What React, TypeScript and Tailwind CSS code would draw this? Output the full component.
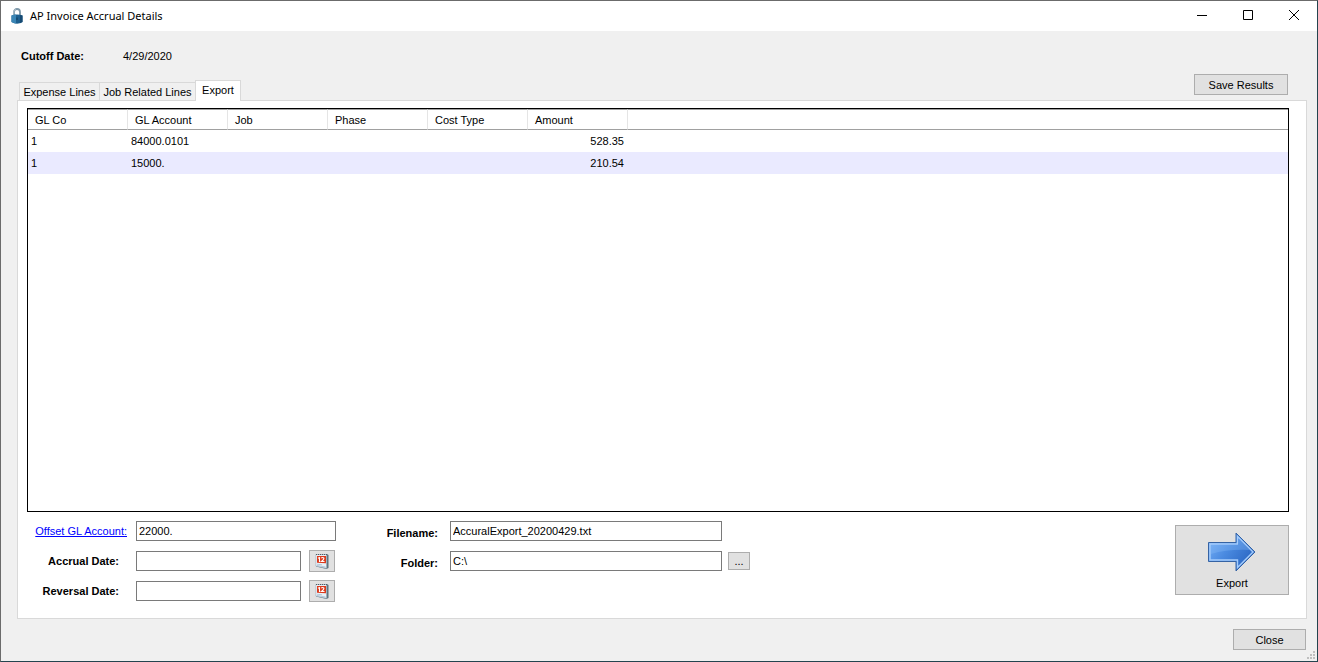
import { useState } from 'react';

const tabs = [
  { name: 'Expense Lines', width: 'w-20' },
  { name: 'Job Related Lines', width: 'w-24' },
  { name: 'Export', width: 'w-[46px]' },
];

const columns = ['GL Co', 'GL Account', 'Job', 'Phase', 'Cost Type', 'Amount'];

const rows = [
  { co: '1', account: '84000.0101', job: '', phase: '', costType: '', amount: '528.35' },
  { co: '1', account: '15000.', job: '', phase: '', costType: '', amount: '210.54' },
];

const buttonClass = 'border border-[#adadad] bg-[#e1e1e1] text-center hover:bg-[#e5f1fb]';
const inputClass = 'h-5 min-w-0 border border-[#7a7a7a] bg-white px-0.5 outline-none focus:border-[#0078d7]';

function LockIcon() {
  return (
    <svg className="h-4 w-3" viewBox="0 0 12 16" fill="none">
      <path d="M3 8V4a3 3 0 0 1 6 0v4" stroke="#7d97a8" strokeWidth="1.8" />
      <path d="M2.8 8V4a3 3 0 0 1 2-2.700" stroke="#b9cad4" strokeWidth="0.8" />
      <path d="M0.500 7.500Q6 5.500 11.500 7.500V14Q6 17.500 0.500 14Z" fill="#1d5f8f" />
      <path d="M0.500 7.500Q3 6.500 5 6.500V15.600Q2.500 15.200 0.500 14Z" fill="#3a85b5" />
      <path d="M9 6.900L11.500 7.500V14L9 15.200Z" fill="#164a73" />
      <path d="M6 9.500V12" stroke="#0f3858" />
    </svg>
  );
}

function CalendarIcon() {
  return (
    <svg className="h-4 w-4" viewBox="0 0 16 16" fill="none">
      <path d="M2 1.500L13 1L14.500 2V15L12.500 16L2 13.500Z" fill="#5f7480" />
      <path d="M1.800 1.500H12.500V15.200L1.800 13Z" fill="#e9f0f6" stroke="#9fb0bd" strokeWidth="0.6" />
      <path d="M2 1.500H13" stroke="#525c63" strokeDasharray="1 1" />
      <path d="M3 3H12V10.200L3 9.800Z" fill="#dc3a1c" />
      <path d="M4 5.200L5.500 4.500V9" stroke="#fff" strokeWidth="1.100" />
      <path d="M7.200 5.200Q8.500 4 9.800 5Q10.400 6.200 7.500 8.500H10.500" stroke="#fff" strokeWidth="1.100" />
      <path d="M3 11.200L8 11.800M3 12.500L11.500 14" stroke="#b5c9da" />
    </svg>
  );
}

function ArrowIcon() {
  return (
    <svg className="h-10 w-12" viewBox="0 0 48 40" fill="none">
      <defs>
        <linearGradient id="arrow" x1="0" y1="0" x2="1" y2="0.6">
          <stop offset="0" stopColor="#7db6fa" />
          <stop offset="0.5" stopColor="#4a8ae0" />
          <stop offset="1" stopColor="#2a66c2" />
        </linearGradient>
      </defs>
      <path d="M0.500 10.500H28V1L47 20L28 39V29.500H0.500Z" fill="url(#arrow)" stroke="#3563a4" />
      <path d="M2 28V12H29.500V4.500L45 20L29.500 35.500V28Z" stroke="#a6cdfb" strokeWidth="1.400" />
      <path d="M3 13H30.500V7L42 18Q20 17 3 22Z" fill="#8fc0fa" opacity="0.3" />
    </svg>
  );
}

function TitleBar() {
  return (
    <header className="flex h-[30px] shrink-0 items-center bg-white pl-2.5">
      <LockIcon />
      <h1 className="ml-[7px] font-['Noto_Sans',sans-serif] text-[11px]">AP Invoice Accrual Details</h1>
      <div className="ml-auto flex h-full">
        <button aria-label="Minimize" className="flex w-[46px] items-center justify-center hover:bg-gray-200">
          <svg className="h-3 w-3" viewBox="0 0 12 12" stroke="#000"><path d="M1 5.500H11" /></svg>
        </button>
        <button aria-label="Maximize" className="flex w-[46px] items-center justify-center hover:bg-gray-200">
          <svg className="h-3 w-3" viewBox="0 0 12 12" stroke="#000" fill="none"><path d="M1.500 0.500H10.500V9.500H1.500Z" /></svg>
        </button>
        <button aria-label="Close window" className="flex w-[46px] items-center justify-center hover:bg-red-500">
          <svg className="h-3 w-3" viewBox="0 0 12 12" stroke="#000"><path d="M1 0L11 10M11 0L1 10" /></svg>
        </button>
      </div>
    </header>
  );
}

function LinesTable() {
  return (
    <div className="flex-1 border border-black bg-white">
      <table className="w-full table-fixed border-separate border-spacing-0">
        <thead>
          <tr className="h-[21px]">
            {columns.map((column) => (
              <th
                key={column}
                className="w-[100px] border-y border-r border-y-[#a0a0a0] border-r-[#e5e5e5] p-0 pl-[7px] text-left font-normal"
              >
                {column}
              </th>
            ))}
            <th className="border-y border-[#a0a0a0] p-0" />
          </tr>
        </thead>
        <tbody>
          {rows.map((row) => (
            <tr key={row.account} className="h-[22px] even:bg-[#eaeaff]">
              <td className="p-0 pl-[3px]">{row.co}</td>
              <td className="p-0 pl-[3px]">{row.account}</td>
              <td className="p-0 pl-[3px]">{row.job}</td>
              <td className="p-0 pl-[3px]">{row.phase}</td>
              <td className="p-0 pl-[3px]">{row.costType}</td>
              <td className="p-0 pr-1 text-right">{row.amount}</td>
              <td className="p-0" />
            </tr>
          ))}
        </tbody>
      </table>
    </div>
  );
}

function DateField({ id, label }: { id: string; label: string }) {
  const [value, setValue] = useState('');

  return (
    <>
      <label htmlFor={id} className="pr-2 text-right font-bold">{label}</label>
      <div className="flex items-center gap-2">
        <input id={id} className={`${inputClass} w-[165px]`} value={value} onChange={(e) => setValue(e.target.value)} />
        <button aria-label={`Pick ${label}`} className={`${buttonClass} flex h-[22px] w-[26px] items-center justify-center`}>
          <CalendarIcon />
        </button>
      </div>
    </>
  );
}

function ExportForm() {
  const [account, setAccount] = useState('22000.');
  const [filename, setFilename] = useState('AccuralExport_20200429.txt');
  const [folder, setFolder] = useState('C:\\');

  return (
    <div className="flex items-start pt-1">
      <div className="grid auto-rows-[30px] grid-cols-[100px_200px] items-center gap-x-[9px]">
        <a href="#accounts" className="text-right text-[#0000ff] underline">Offset GL Account:</a>
        <input
          aria-label="Offset GL Account"
          className={inputClass}
          value={account}
          onChange={(e) => setAccount(e.target.value)}
        />
        <DateField id="accrual-date" label="Accrual Date:" />
        <DateField id="reversal-date" label="Reversal Date:" />
      </div>
      <div className="ml-12 grid auto-rows-[30px] grid-cols-[54px_272px_22px] items-center">
        <label htmlFor="filename" className="pt-1 text-right font-bold">Filename:</label>
        <input
          id="filename"
          className={`${inputClass} ml-3 w-[272px]`}
          value={filename}
          onChange={(e) => setFilename(e.target.value)}
        />
        <span />
        <label htmlFor="folder" className="pt-1 text-right font-bold">Folder:</label>
        <input
          id="folder"
          className={`${inputClass} ml-3 w-[272px]`}
          value={folder}
          onChange={(e) => setFolder(e.target.value)}
        />
        <button aria-label="Browse" className={`${buttonClass} ml-[18px] h-[18px] w-[22px] leading-4`}>...</button>
      </div>
      <button className={`${buttonClass} mt-[9px] ml-auto flex h-[70px] w-[114px] flex-col items-center pt-1.5`}>
        <ArrowIcon />
        <span className="mt-1">Export</span>
      </button>
    </div>
  );
}

export default function App() {
  const [active, setActive] = useState('Export');

  return (
    <div className="flex min-h-screen flex-col border border-[#6b6b6b] border-r-[#24444f] border-b-[#24444f] bg-[#f0f0f0] font-['Liberation_Sans',Arial,sans-serif] text-[11px] leading-[14px] text-black">
      <TitleBar />
      <main className="flex flex-1 flex-col pr-2.5 pl-4">
        <div className="flex h-[69px]">
          <div className="flex flex-col justify-between">
            <div className="flex pt-[18px] pl-1">
              <span className="w-[102px] font-bold">Cutoff Date:</span>
              <span>4/29/2020</span>
            </div>
            <div role="tablist" className="flex items-end pl-0.5">
              {tabs.map(({ name, width }) => (
                <button
                  key={name}
                  role="tab"
                  aria-selected={name === active}
                  onClick={() => setActive(name)}
                  className={`${width} border border-b-0 border-[#d9d9d9] whitespace-nowrap ${
                    name === active ? 'z-10 -mb-px h-[21px] bg-white pb-0.5' : 'h-[18px] border-r-0 bg-[#f0f0f0]'
                  }`}
                >
                  {name}
                </button>
              ))}
            </div>
          </div>
          <button className={`${buttonClass} mt-[43px] mr-[19px] ml-auto h-[21px] w-[94px]`}>Save Results</button>
        </div>
        <section className="flex flex-1 flex-col border border-[#d9d9d9] bg-white pt-[7px] pr-[17px] pb-3 pl-[9px]">
          <LinesTable />
          <ExportForm />
        </section>
      </main>
      <footer className="flex h-[42px] shrink-0 items-end justify-end">
        <button className={`${buttonClass} mb-[11px] h-[21px] w-[73px]`}>Close</button>
        <svg className="h-[11px] w-[11px]" viewBox="0 0 11 11" fill="#bfbfbf">
          <path d="M7 1h2v2h-2zM4 4h2v2h-2zM7 4h2v2h-2zM1 7h2v2h-2zM4 7h2v2h-2zM7 7h2v2h-2z" />
        </svg>
      </footer>
    </div>
  );
}
